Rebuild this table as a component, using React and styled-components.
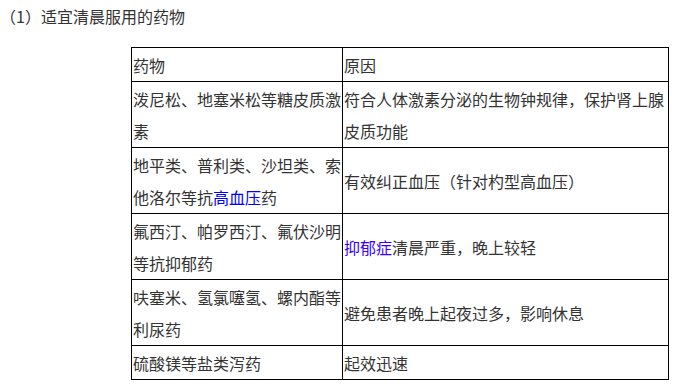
import React from "react";
import styled, { createGlobalStyle } from "styled-components";

const Global = createGlobalStyle`
  html, body {
    margin: 0;
    padding: 0;
    background: #ffffff;
  }
  body {
    font-family: "Noto Sans CJK SC", "Microsoft YaHei", sans-serif;
    font-size: 16px;
    color: #333333;
  }
`;

const Page = styled.div`
  width: 673px;
  height: 384px;
  overflow: hidden;
`;

const Title = styled.div`
  height: 32px;
  line-height: 32px;
  margin-bottom: 15px;
  white-space: nowrap;
`;

const Table = styled.table`
  margin-left: 131px;
  width: 537px;
  border-collapse: collapse;
  table-layout: fixed;
`;

const Col = styled.col`
  width: ${(p) => p.$w}px;
`;

const Cell = styled.td`
  border: 1px solid #000000;
  padding: 1px 1px 0 1px;
  line-height: 32px;
  vertical-align: middle;
  white-space: nowrap;
  text-align: left;
`;

const Link = styled.span`
  color: ${(p) => p.$tone};
`;

const rows = [
  {
    drug: ["泼尼松、地塞米松等糖皮质激", "素"],
    reason: ["符合人体激素分泌的生物钟规律，保护肾上腺", "皮质功能"],
  },
  {
    drug: [
      "地平类、普利类、沙坦类、索",
      <>
        他洛尔等抗<Link $tone="#0000ff">高血压</Link>药
      </>,
    ],
    reason: ["有效纠正血压（针对杓型高血压）"],
  },
  {
    drug: ["氟西汀、帕罗西汀、氟伏沙明", "等抗抑郁药"],
    reason: [
      <>
        <Link $tone="#3a00ff">抑郁症</Link>清晨严重，晚上较轻
      </>,
    ],
  },
  {
    drug: ["呋塞米、氢氯噻氢、螺内酯等", "利尿药"],
    reason: ["避免患者晚上起夜过多，影响休息"],
  },
  {
    drug: ["硫酸镁等盐类泻药"],
    reason: ["起效迅速"],
  },
];

const Lines = ({ items }) =>
  items.map((t, i) => (
    <React.Fragment key={i}>
      {i > 0 && <br />}
      {t}
    </React.Fragment>
  ));

export default function App() {
  return (
    <Page>
      <Global />
      <Title>（1）适宜清晨服用的药物</Title>
      <Table>
        <colgroup>
          <Col $w={211} />
          <Col $w={326} />
        </colgroup>
        <tbody>
          <tr>
            <Cell>药物</Cell>
            <Cell>原因</Cell>
          </tr>
          {rows.map((r, i) => (
            <tr key={i}>
              <Cell>
                <Lines items={r.drug} />
              </Cell>
              <Cell>
                <Lines items={r.reason} />
              </Cell>
            </tr>
          ))}
        </tbody>
      </Table>
    </Page>
  );
}
